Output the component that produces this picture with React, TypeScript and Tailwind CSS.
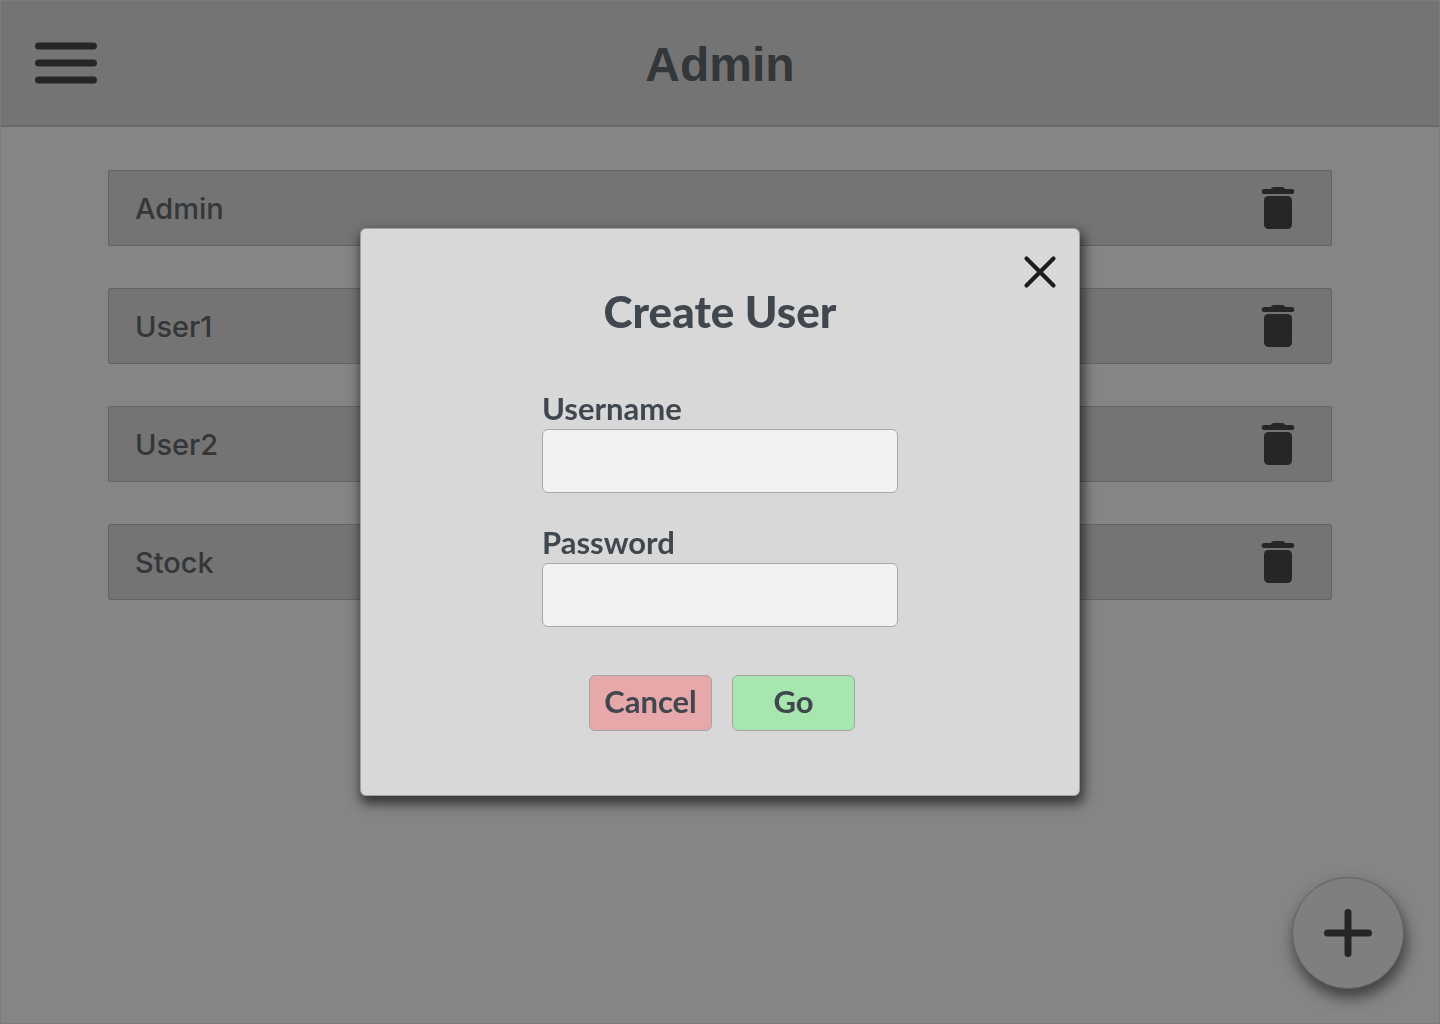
const users = ["Admin", "User1", "User2", "Stock"];

function TrashIcon() {
  return (
    <svg width="34" height="44" viewBox="0 0 34 44" fill="#262626" aria-hidden="true">
      <path d="M3.2 3H9.5C10.6 2.6 11 1 13 1H21C23 1 23.400 2.6 24.500 3H30.800A2.500 2.500 0 0 1 30.800 8H3.200A2.500 2.500 0 0 1 3.200 3Z" />
      <rect x="3" y="10" width="28" height="33" rx="4.500" />
    </svg>
  );
}

function UserRow({ name }: { name: string }) {
  return (
    <li className="flex h-19 items-center justify-between rounded-xs border border-[#636363] bg-[#747474] pr-9 pl-6.5">
      <span className="pt-0.5 font-['Inter','Liberation_Sans',sans-serif] text-[29px] leading-9 font-medium text-[#33373a]">
        {name}
      </span>
      <button type="button" aria-label={"Delete " + name}>
        <TrashIcon />
      </button>
    </li>
  );
}

function Field({ id, label, type }: { id: string; label: string; type: string }) {
  return (
    <div className="flex flex-col gap-1">
      <label htmlFor={id} className="text-[31px] leading-8.5 font-bold">
        {label}
      </label>
      <input
        id={id}
        type={type}
        className="h-16 w-full rounded-md border border-[#a8a8a8] bg-[#f1f1f1] px-4 text-2xl outline-none"
      />
    </div>
  );
}

function CreateUserDialog() {
  return (
    <div className="fixed inset-0 flex items-center justify-center p-4">
      <form
        role="dialog"
        aria-modal="true"
        aria-labelledby="dialog-title"
        className="relative flex w-full max-w-[720px] flex-col items-center rounded-md border border-[#a0a0a0] bg-[#d8d8d8] pt-14.5 pb-16 font-['Lato',sans-serif] text-[#40474f] shadow-[2px_6px_12px_2px_rgba(0,0,0,0.6)]"
      >
        <button type="button" aria-label="Close" className="absolute top-6 right-5">
          <svg width="38" height="38" viewBox="0 0 38 38" stroke="#1d1d1d" strokeWidth="4.200" strokeLinecap="round" aria-hidden="true">
            <path d="M5.500 5.500L32.500 32.500M32.500 5.500L5.500 32.500" />
          </svg>
        </button>
        <h2 id="dialog-title" className="text-[44px] leading-12 font-black">
          Create User
        </h2>
        <div className="mt-14 flex w-full max-w-[356px] flex-col gap-8">
          <Field id="username" label="Username" type="text" />
          <Field id="password" label="Password" type="password" />
        </div>
        <div className="mt-12 flex gap-5 pl-1 text-[31px] leading-9 font-bold">
          <button type="button" className="h-14 w-[123px] rounded-md border border-[#a5a5a5] bg-[#e6a8a8] pb-1">
            Cancel
          </button>
          <button type="submit" className="h-14 w-[123px] rounded-md border border-[#a5a5a5] bg-[#a7e7af] pb-1">
            Go
          </button>
        </div>
      </form>
    </div>
  );
}

export default function App() {
  return (
    <div className="min-h-screen border border-[#7c7c7c] bg-[#858585]">
      <header className="grid h-[126px] grid-cols-[1fr_auto_1fr] items-center border-b-2 border-[#696969] bg-[#747474] px-8">
        <button type="button" aria-label="Open menu" className="justify-self-start">
          <svg width="64" height="44" viewBox="0 0 64 44" stroke="#262626" strokeWidth="7" strokeLinecap="round" aria-hidden="true">
            <path d="M5.500 5H60.500M5.500 22H60.500M5.500 39H60.500" />
          </svg>
        </button>
        <h1 className="pt-1 font-['Liberation_Sans',Arial,sans-serif] text-[48px] leading-14 font-bold text-[#33373a]">
          Admin
        </h1>
      </header>
      <main className="px-[107px] pt-[43px]">
        <ul className="flex flex-col gap-10.5">
          {users.map((name) => (
            <UserRow key={name} name={name} />
          ))}
        </ul>
      </main>
      <button
        type="button"
        aria-label="Add user"
        className="fixed right-9 bottom-[35px] flex size-[112px] items-center justify-center rounded-full border border-[#626262] bg-[#7f7f7f] shadow-[2px_8px_14px_1px_rgba(0,0,0,0.5)]"
      >
        <svg width="48" height="48" viewBox="0 0 48 48" stroke="#262626" strokeWidth="7" strokeLinecap="round" aria-hidden="true">
          <path d="M24 3.500V44.500M3.500 24H44.500" />
        </svg>
      </button>
      <CreateUserDialog />
    </div>
  );
}
